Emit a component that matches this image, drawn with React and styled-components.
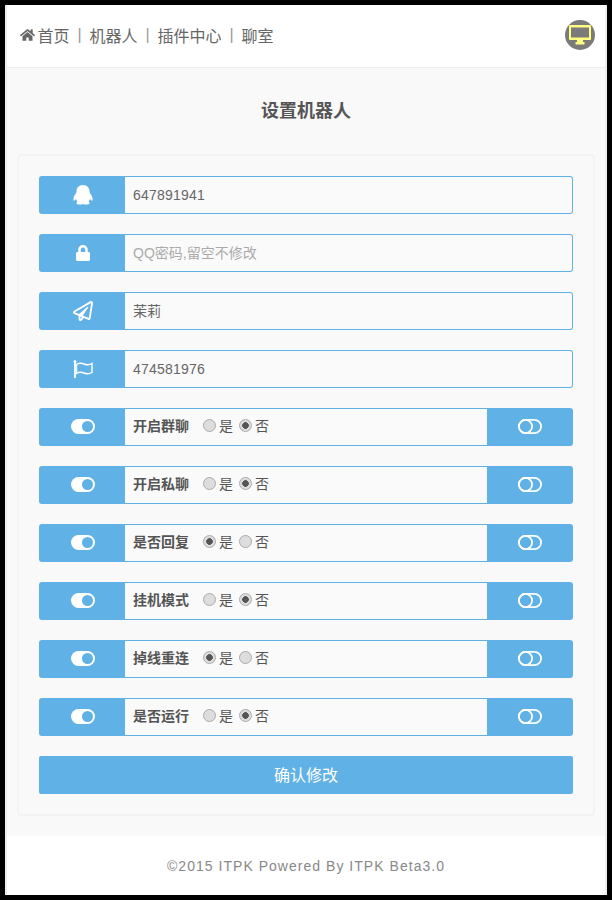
import React from 'react';
import styled, { createGlobalStyle } from 'styled-components';
import { FaHome, FaLock, FaRegPaperPlane } from 'react-icons/fa';

const BLUE = '#5fb1e6';

const GlobalStyle = createGlobalStyle`
  html, body {
    margin: 0;
    padding: 0;
    background: #000;
  }
  body {
    font-family: "Liberation Sans", "Noto Sans CJK SC", sans-serif;
    color: #555;
  }
  * {
    box-sizing: border-box;
  }
`;

const Frame = styled.div`
  width: 612px;
  height: 900px;
  padding: 5px;
  background: #000;
`;

const Page = styled.div`
  height: 890px;
  width: 602px;
  display: flex;
  flex-direction: column;
  background: #fff;
  border-left: 2px solid #eee;
  border-right: 2px solid #eee;
`;

const Header = styled.header`
  height: 63px;
  flex: none;
  display: flex;
  align-items: center;
  justify-content: space-between;
  padding: 0 10px 3px 13px;
  border-bottom: 1px solid #eee;
`;

const Nav = styled.nav`
  display: flex;
  align-items: center;
  font-size: 16px;
  color: #666;
`;

const HomeIcon = styled(FaHome)`
  width: 15px;
  height: 14px;
  margin-right: 2.6px;
  color: #666;
`;

const Sep = styled.span`
  margin: 0 7.9px;
  color: #999;
`;

const Avatar = styled.div`
  width: 30px;
  height: 30px;
  border-radius: 50%;
  background: #7b7b7b;
  display: flex;
  align-items: center;
  justify-content: center;
`;

const Main = styled.main`
  flex: 1;
  background: #f9f9f9;
  padding: 0 10px 20px;
  display: flex;
  flex-direction: column;
`;

const Title = styled.h2`
  margin: 0;
  height: 86px;
  padding-top: 31px;
  font-size: 18px;
  line-height: 24px;
  font-weight: bold;
  text-align: center;
  color: #555;
`;

const Card = styled.form`
  flex: 1;
  border: 2px solid #f3f3f3;
  border-radius: 4px;
  padding: 20px;
  display: flex;
  flex-direction: column;
  gap: 20px;
`;

const Group = styled.div`
  display: flex;
  height: 38px;
`;

const Addon = styled.div`
  width: 86px;
  flex: none;
  padding-left: ${(p) => (p.$right ? '0' : '1px')};
  background: ${BLUE};
  color: #fff;
  font-size: 20px;
  display: flex;
  align-items: center;
  justify-content: center;
  border-radius: ${(p) => (p.$right ? '0 3px 3px 0' : '3px 0 0 3px')};
`;

const TextInput = styled.input`
  flex: 1;
  min-width: 0;
  height: 38px;
  padding: 0 8px ${(p) => (p.$cjk ? '2px' : '0')};
  border: 1px solid ${BLUE};
  border-left: 0;
  border-radius: 0 3px 3px 0;
  outline: none;
  background: #fafafa;
  font-family: inherit;
  font-size: 14px;
  letter-spacing: ${(p) => (p.$cjk ? '0' : '0.2px')};
  color: #666;
  &::placeholder {
    color: #aaa;
    opacity: 1;
    letter-spacing: 0;
  }
`;

const SwitchBody = styled.div`
  flex: 1;
  display: flex;
  align-items: center;
  padding: 0 8px 3px;
  border-top: 1px solid ${BLUE};
  border-bottom: 1px solid ${BLUE};
  background: #fafafa;
  font-size: 14px;
  line-height: 20px;
  color: #555;
`;

const SwitchName = styled.b`
  width: 70px;
  padding-top: 1px;
  font-weight: bold;
`;

const RadioLabel = styled.label`
  display: flex;
  align-items: center;
  margin-right: 6px;
`;

const Radio = styled.input.attrs({ type: 'radio' })`
  appearance: none;
  width: 13px;
  height: 13px;
  margin: 0 3px 0 0;
  border: 1px solid #aaa;
  border-radius: 50%;
  background: #ddd;
  &:checked {
    background: radial-gradient(circle, #555 0 3px, #ddd 3.6px);
  }
`;

const Submit = styled.button`
  height: 38px;
  flex: none;
  padding: 0 0 2px;
  border: 0;
  border-radius: 2px;
  background: ${BLUE};
  color: #fff;
  font-family: inherit;
  font-size: 16px;
`;

const Footer = styled.footer`
  height: 59px;
  flex: none;
  display: flex;
  align-items: center;
  justify-content: center;
  font-size: 14px;
  letter-spacing: 1.03px;
  color: #888;
`;

const ToggleSvg = styled.svg`
  margin-bottom: 1px;
`;

const Monitor = () => (
  <svg width="22" height="20" viewBox="0 0 22 20">
    <path d="M1 0h20a1 1 0 0 1 1 1v13a1 1 0 0 1-1 1h-7v2h1.500v2.500h-9V17H8v-2H1a1 1 0 0 1-1-1V1a1 1 0 0 1 1-1z" fill="#ffff80" />
    <rect x="2" y="2.500" width="18" height="10" fill="#7b7b7b" />
  </svg>
);

const QqIcon = () => (
  <svg width="20" height="20" viewBox="0 0 20 20" fill="#fff">
    <path d="M10 0C5.500 0 3.500 3 3.500 6.500c0 .8-.5 1.500-1 2.500C1 11 0 13 .5 15.500c.5.5 2-.5 2.500-1.500.3 1 1 2 1.500 2.500-1 .5-1.500 1.500-.5 2.500 1.500 1 4.500.5 6 0 1.500.5 4.500 1 6 0 1-1 .5-2-.5-2.500.5-.5 1.200-1.500 1.500-2.500.5 1 2 2 2.500 1.500.5-2.500-.5-4.500-2-6.500-.5-1-1-1.700-1-2.500C16.500 3 14.500 0 10 0z" />
  </svg>
);

const FlagIcon = () => (
  <svg width="20" height="18" viewBox="0 0 20 18" fill="none" stroke="#fff">
    <path d="M2 1v17" strokeWidth="1.800" />
    <circle cx="2" cy="1.500" r="1.500" fill="#fff" stroke="none" />
    <path d="M3.500 4.500c3-2 5-1.500 7.500-.5s5 1.500 8-.5v9c-3 2-5.500 1.500-8 .5s-4.500-1.500-7.500.5z" strokeWidth="1.500" />
  </svg>
);

const ToggleOn = () => (
  <ToggleSvg width="24" height="15" viewBox="0 0 24 15">
    <rect width="24" height="15" rx="7.500" fill="#fff" />
    <circle cx="16.500" cy="7.500" r="5.500" fill={BLUE} />
  </ToggleSvg>
);

const ToggleOff = () => (
  <ToggleSvg width="24" height="15" viewBox="0 0 24 15" fill="none" stroke="#fff" strokeWidth="1.800">
    <rect x="0.900" y="0.900" width="22.200" height="13.200" rx="6.600" />
    <circle cx="7.500" cy="7.500" r="6.600" />
  </ToggleSvg>
);

const switches = [
  { name: '开启群聊', on: false },
  { name: '开启私聊', on: false },
  { name: '是否回复', on: true },
  { name: '挂机模式', on: false },
  { name: '掉线重连', on: true },
  { name: '是否运行', on: false },
];

const App = () => (
  <Frame>
    <GlobalStyle />
    <Page>
      <Header>
        <Nav>
          <HomeIcon />
          首页<Sep>|</Sep>机器人<Sep>|</Sep>插件中心<Sep>|</Sep>聊室
        </Nav>
        <Avatar>
          <Monitor />
        </Avatar>
      </Header>

      <Main>
        <Title>设置机器人</Title>
        <Card onSubmit={(e) => e.preventDefault()}>
          <Group>
            <Addon><QqIcon /></Addon>
            <TextInput defaultValue="647891941" />
          </Group>
          <Group>
            <Addon><FaLock size={16} /></Addon>
            <TextInput placeholder="QQ密码,留空不修改" />
          </Group>
          <Group>
            <Addon><FaRegPaperPlane /></Addon>
            <TextInput $cjk defaultValue="茉莉" />
          </Group>
          <Group>
            <Addon><FlagIcon /></Addon>
            <TextInput defaultValue="474581976" />
          </Group>

          {switches.map((s) => (
            <Group key={s.name}>
              <Addon><ToggleOn /></Addon>
              <SwitchBody>
                <SwitchName>{s.name}</SwitchName>
                <RadioLabel>
                  <Radio name={s.name} defaultChecked={s.on} />是
                </RadioLabel>
                <RadioLabel>
                  <Radio name={s.name} defaultChecked={!s.on} />否
                </RadioLabel>
              </SwitchBody>
              <Addon $right><ToggleOff /></Addon>
            </Group>
          ))}

          <Submit type="submit">确认修改</Submit>
        </Card>
      </Main>

      <Footer>©2015 ITPK Powered By ITPK Beta3.0</Footer>
    </Page>
  </Frame>
);

export default App;
